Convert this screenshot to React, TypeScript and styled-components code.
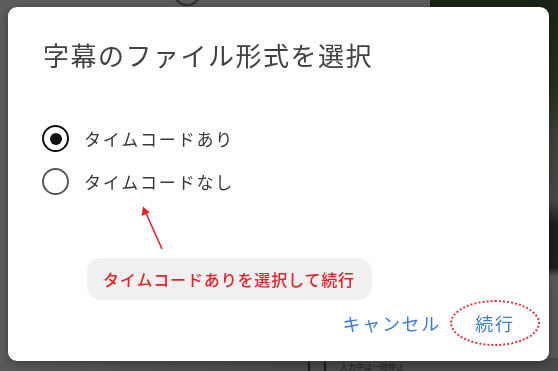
import React, { useState } from "react";
import styled, { createGlobalStyle } from "styled-components";

const GlobalStyle = createGlobalStyle`
  html, body {
    margin: 0;
    padding: 0;
    width: 558px;
    height: 371px;
    overflow: hidden;
    background: #5c5c5c;
  }
  * { box-sizing: border-box; }
  body {
    font-family: "Noto Sans CJK JP", "Noto Sans", sans-serif;
  }
`;

const FONT = `"Noto Sans CJK JP", "Noto Sans", sans-serif`;

/* ---------- background scene (dimmed app behind the dialog) ---------- */

const Scene = styled.div`
  width: 558px;
  height: 371px;
  display: grid;
  grid-template-columns: 430px 1fr;
  grid-template-rows: 358px 13px;
  overflow: hidden;
`;

const LeftPanel = styled.div`
  background: #5d5d5d;
  padding-left: 173px;
`;

const TopIcon = styled.div`
  width: 28px;
  height: 28px;
  margin-top: -22px;
  border: 2px solid #2e2e2e;
  border-radius: 50%;
`;

const VideoPanel = styled.div`
  background: linear-gradient(
    180deg,
    #1b2418 0px,
    #26301f 90px,
    #3f423b 140px,
    #4a4a48 200px,
    #1c1c1c 225px,
    #1f1f1f 268px,
    #5a5a5a 276px,
    #585858 358px
  );
`;

const BottomBar = styled.div`
  grid-column: 1 / -1;
  background: linear-gradient(90deg, #5a5a5a 0px, #4a4a4a 300px, #4a4a4a 100%);
  display: flex;
  align-items: flex-start;
  padding: 4px 0 0 308px;
  gap: 14px;
  overflow: hidden;
  font-family: ${FONT};
  font-size: 8px;
  line-height: 9px;
  color: #1e1e1e;
`;

const PauseMark = styled.span`
  display: inline-flex;
  gap: 14px;
  & > i {
    display: block;
    width: 2px;
    height: 20px;
    background: #1e1e1e;
  }
`;

/* ---------- dialog ---------- */

const Overlay = styled.div`
  position: fixed;
  inset: 0;
  display: flex;
  align-items: flex-start;
  justify-content: flex-start;
  padding: 7px 0 0 8px;
`;

const Dialog = styled.div`
  width: 541px;
  height: 354px;
  background: #ffffff;
  border-radius: 9px;
  box-shadow: 0 2px 10px rgba(0, 0, 0, 0.35);
  display: flex;
  flex-direction: column;
  padding: 32px 0 15px 0;
  font-family: ${FONT};
`;

const Title = styled.h1`
  margin: 0 0 0 35px;
  font-size: 26px;
  line-height: 32px;
  font-weight: 400;
  letter-spacing: 1.5px;
  color: #424242;
`;

const RadioGroup = styled.div`
  margin: 46px 0 0 34px;
  display: flex;
  flex-direction: column;
`;

const RadioRow = styled.label`
  height: 43px;
  display: flex;
  align-items: center;
  gap: 15px;
  cursor: pointer;
`;

const RadioCircle = styled.span<{ $checked: boolean }>`
  width: 27px;
  height: 27px;
  border-radius: 50%;
  border: ${(p) => (p.$checked ? "2.8px solid #111" : "2px solid #595959")};
  display: flex;
  align-items: center;
  justify-content: center;
  &::after {
    content: "";
    width: 12px;
    height: 12px;
    border-radius: 50%;
    background: ${(p) => (p.$checked ? "#111" : "transparent")};
  }
`;

const RadioLabel = styled.span`
  font-size: 17px;
  line-height: 24px;
  letter-spacing: 1.8px;
  color: #383838;
`;

const ArrowBox = styled.div`
  height: 55px;
  padding-left: 122px;
`;

const Callout = styled.div`
  margin-left: 79px;
  width: 285px;
  height: 42px;
  border-radius: 14px;
  background: #f0f0f0;
  display: flex;
  align-items: center;
  padding-left: 16px;
  font-size: 16px;
  font-weight: 500;
  letter-spacing: 0.85px;
  color: #e0222a;
`;

const Actions = styled.div`
  height: 46px;
  display: flex;
  align-items: center;
  justify-content: flex-end;
  gap: 9px;
  padding-right: 9px;
`;

const TextButton = styled.button<{ $marked?: boolean }>`
  font-family: ${FONT};
  font-size: 18px;
  letter-spacing: 1.7px;
  color: #3f7bd7;
  background: transparent;
  border: ${(p) => (p.$marked ? "2px dotted #e0303a" : "none")};
  border-radius: 50%;
  height: ${(p) => (p.$marked ? "46px" : "auto")};
  width: ${(p) => (p.$marked ? "90px" : "auto")};
  padding: 0;
  display: flex;
  align-items: center;
  justify-content: center;
  cursor: pointer;
`;

export default function App() {
  const [value, setValue] = useState<"with" | "without">("with");
  return (
    <>
      <GlobalStyle />
      <Scene>
        <LeftPanel>
          <TopIcon />
        </LeftPanel>
        <VideoPanel />
        <BottomBar>
          <PauseMark>
            <i />
            <i />
          </PauseMark>
          <span>入力中は一時停止</span>
        </BottomBar>
      </Scene>
      <Overlay>
        <Dialog role="dialog">
          <Title>字幕のファイル形式を選択</Title>
          <RadioGroup>
            <RadioRow onClick={() => setValue("with")}>
              <RadioCircle $checked={value === "with"} />
              <RadioLabel>タイムコードあり</RadioLabel>
            </RadioRow>
            <RadioRow onClick={() => setValue("without")}>
              <RadioCircle $checked={value === "without"} />
              <RadioLabel>タイムコードなし</RadioLabel>
            </RadioRow>
          </RadioGroup>
          <ArrowBox>
            <svg width="44" height="55" viewBox="0 0 44 55">
              <line x1="32" y1="46" x2="15.5" y2="9" stroke="#e0262c" strokeWidth="1.6" />
              <polygon points="13,3.5 11.6,13 19.8,9.4" fill="#e0262c" />
            </svg>
          </ArrowBox>
          <Callout>タイムコードありを選択して続行</Callout>
          <Actions>
            <TextButton>キャンセル</TextButton>
            <TextButton $marked>続行</TextButton>
          </Actions>
        </Dialog>
      </Overlay>
    </>
  );
}
